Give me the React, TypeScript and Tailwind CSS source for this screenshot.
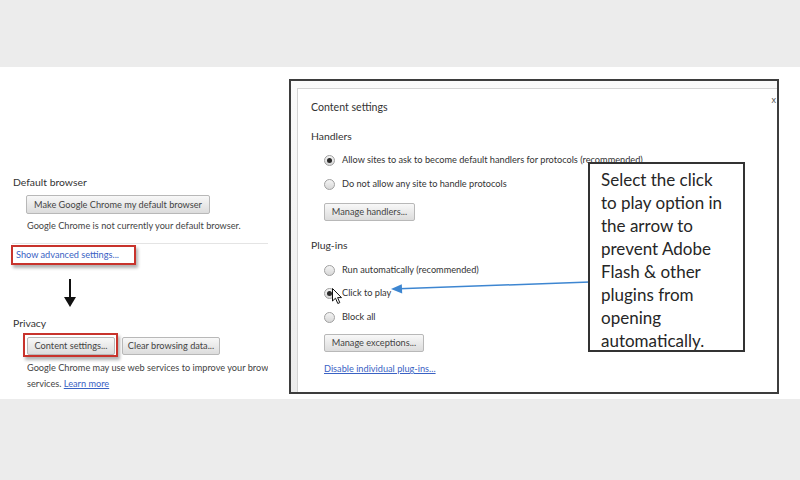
import React from "react";

function Btn({ label, className = "" }: { label: string; className?: string }) {
  return (
    <div
      className={`flex items-center justify-center rounded-[2px] border border-[#b8b8b8] bg-gradient-to-b from-[#f8f8f8] to-[#dcdcdc] text-[9.2px] text-[#444] whitespace-nowrap ${className}`}
    >
      {label}
    </div>
  );
}

function Radio({ on }: { on?: boolean }) {
  return (
    <div className="w-[11px] h-[11px] rounded-full border border-[#a0a0a0] bg-gradient-to-b from-[#f4f4f4] to-[#d8d8d8] flex items-center justify-center shrink-0">
      {on && <div className="w-[5px] h-[5px] rounded-full bg-[#2a2a2a]" />}
    </div>
  );
}

function RadioRow({ label, on, className = "" }: { label: string; on?: boolean; className?: string }) {
  return (
    <div className={`flex items-center gap-[7px] ml-[13px] h-[14px] ${className}`}>
      <Radio on={on} />
      <span className="text-[9.2px] text-[#333] whitespace-nowrap">{label}</span>
    </div>
  );
}

function LeftPanel() {
  return (
    <div className="w-[289px] shrink-0 overflow-hidden">
      <div className="w-[268px] pt-[108px] pl-[13px] flex flex-col items-start overflow-hidden">
        <div className="text-[10.4px] leading-[14px] text-[#333]">Default browser</div>
        <Btn label="Make Google Chrome my default browser" className="mt-[6px] ml-[13px] h-[19px] w-[184px]" />
        <div className="mt-[5px] ml-[14px] text-[9.2px] leading-[14px] text-[#444] whitespace-nowrap">
          Google Chrome is not currently your default browser.
        </div>
        <div className="mt-[10px] -ml-[1px] h-px w-[256px] bg-[#e4e4e4]" />
        {/* red highlight */}
        <div className="mt-[1px] -ml-[2px] h-[20px] w-[125px] border-2 border-[#c8332c] shadow-[2px_3px_3px_rgba(0,0,0,0.3)] flex items-center pl-[3px]">
          <span className="text-[9.2px] text-[#3a62c4] whitespace-nowrap">Show advanced settings...</span>
        </div>
        <svg className="mt-[14px] ml-[51px]" width="12" height="28" viewBox="0 0 12 28">
          <line x1="6" y1="0" x2="6" y2="20" stroke="#111" strokeWidth="2" />
          <polygon points="0,18 12,18 6,28" fill="#111" />
        </svg>
        <div className="mt-[9px] text-[10.4px] leading-[14px] text-[#333]">Privacy</div>
        <div className="mt-[3px] ml-[10px] flex items-start">
          <div className="h-[24px] w-[95px] border-2 border-[#c8332c] shadow-[2px_3px_3px_rgba(0,0,0,0.3)] pt-[2px] pl-[2px]">
            <Btn label="Content settings..." className="h-[18px] w-[88px]" />
          </div>
          <Btn label="Clear browsing data..." className="mt-[4px] ml-[4px] h-[18px] w-[98px]" />
        </div>
        <div className="mt-[3px] ml-[14px] w-[241px] overflow-hidden text-[9.2px] leading-[16px] text-[#444] whitespace-nowrap">
          <div>Google Chrome may use web services to improve your brows</div>
          <div>
            services. <span className="text-[#3a62c4] underline">Learn more</span>
          </div>
        </div>
      </div>
    </div>
  );
}

function Dialog() {
  return (
    <div className="ml-[6px] mt-[7px] h-full bg-white border-l border-t border-[#d4d4d4] pl-[13px] pt-[11px] flex flex-col items-start">
      <div className="text-[10.6px] leading-[15px] text-[#333]">Content settings</div>
      <div className="mt-[14px] text-[10.4px] leading-[14px] text-[#333]">Handlers</div>
      <RadioRow on label="Allow sites to ask to become default handlers for protocols (recommended)" className="mt-[10px]" />
      <RadioRow label="Do not allow any site to handle protocols" className="mt-[10px]" />
      <Btn label="Manage handlers..." className="mt-[12px] ml-[13px] h-[18px] w-[91px]" />
      <div className="mt-[17px] text-[10.4px] leading-[14px] text-[#333]">Plug-ins</div>
      <RadioRow label="Run automatically (recommended)" className="mt-[11px]" />
      <RadioRow on label="Click to play" className="mt-[9px]" />
      <RadioRow label="Block all" className="mt-[10px]" />
      <Btn label="Manage exceptions..." className="mt-[10px] ml-[13px] h-[18px] w-[100px]" />
      <div className="mt-[10px] ml-[13px] text-[9.2px] leading-[14px] text-[#3a62c4] underline whitespace-nowrap">
        Disable individual plug-ins...
      </div>
    </div>
  );
}

export default function App() {
  return (
    <div className="w-[800px] h-[480px] flex flex-col bg-[#ececec] font-['Lato',sans-serif]">
      <div className="h-[67px] shrink-0" />
      <div className="h-[332px] shrink-0 bg-white flex">
        <LeftPanel />
        <div className="relative mt-[12px] w-[490px] h-[315px] border-2 border-[#3d3d3d] bg-gradient-to-b from-[#fafafa] to-[#ececec] overflow-hidden">
          <Dialog />
          <span className="absolute right-[1px] top-[12px] text-[9px] text-[#555]">x</span>

          {/* blue pointer arrow */}
          <svg className="absolute left-0 top-0" width="486" height="311" viewBox="0 0 486 311">
            <line x1="299" y1="201" x2="108" y2="207.7" stroke="#3d86d1" strokeWidth="1.5" />
            <polygon points="100,208 111.2,212.4 110.8,203.2" fill="#3d86d1" />
          </svg>

          {/* mouse cursor */}
          <svg className="absolute left-[41px] top-[207px]" width="11" height="17" viewBox="0 0 11 17">
            <path d="M0.5 0.5 L0.5 13 L3.5 10.2 L5.8 15.5 L7.8 14.6 L5.6 9.6 L9.5 9.6 Z" fill="#fff" stroke="#111" strokeWidth="1" strokeLinejoin="round" />
          </svg>

          {/* callout */}
          <div className="absolute left-[297px] top-[81px] w-[157px] h-[190px] border-2 border-[#333] bg-white pl-[11px] pt-[4px] text-[17px] leading-[23px] text-[#262626]">
            <div>Select the click</div>
            <div>to play option in</div>
            <div>the arrow to</div>
            <div>prevent Adobe</div>
            <div>Flash &amp; other</div>
            <div>plugins from</div>
            <div>opening</div>
            <div>automatically.</div>
          </div>
        </div>
      </div>
    </div>
  );
}
